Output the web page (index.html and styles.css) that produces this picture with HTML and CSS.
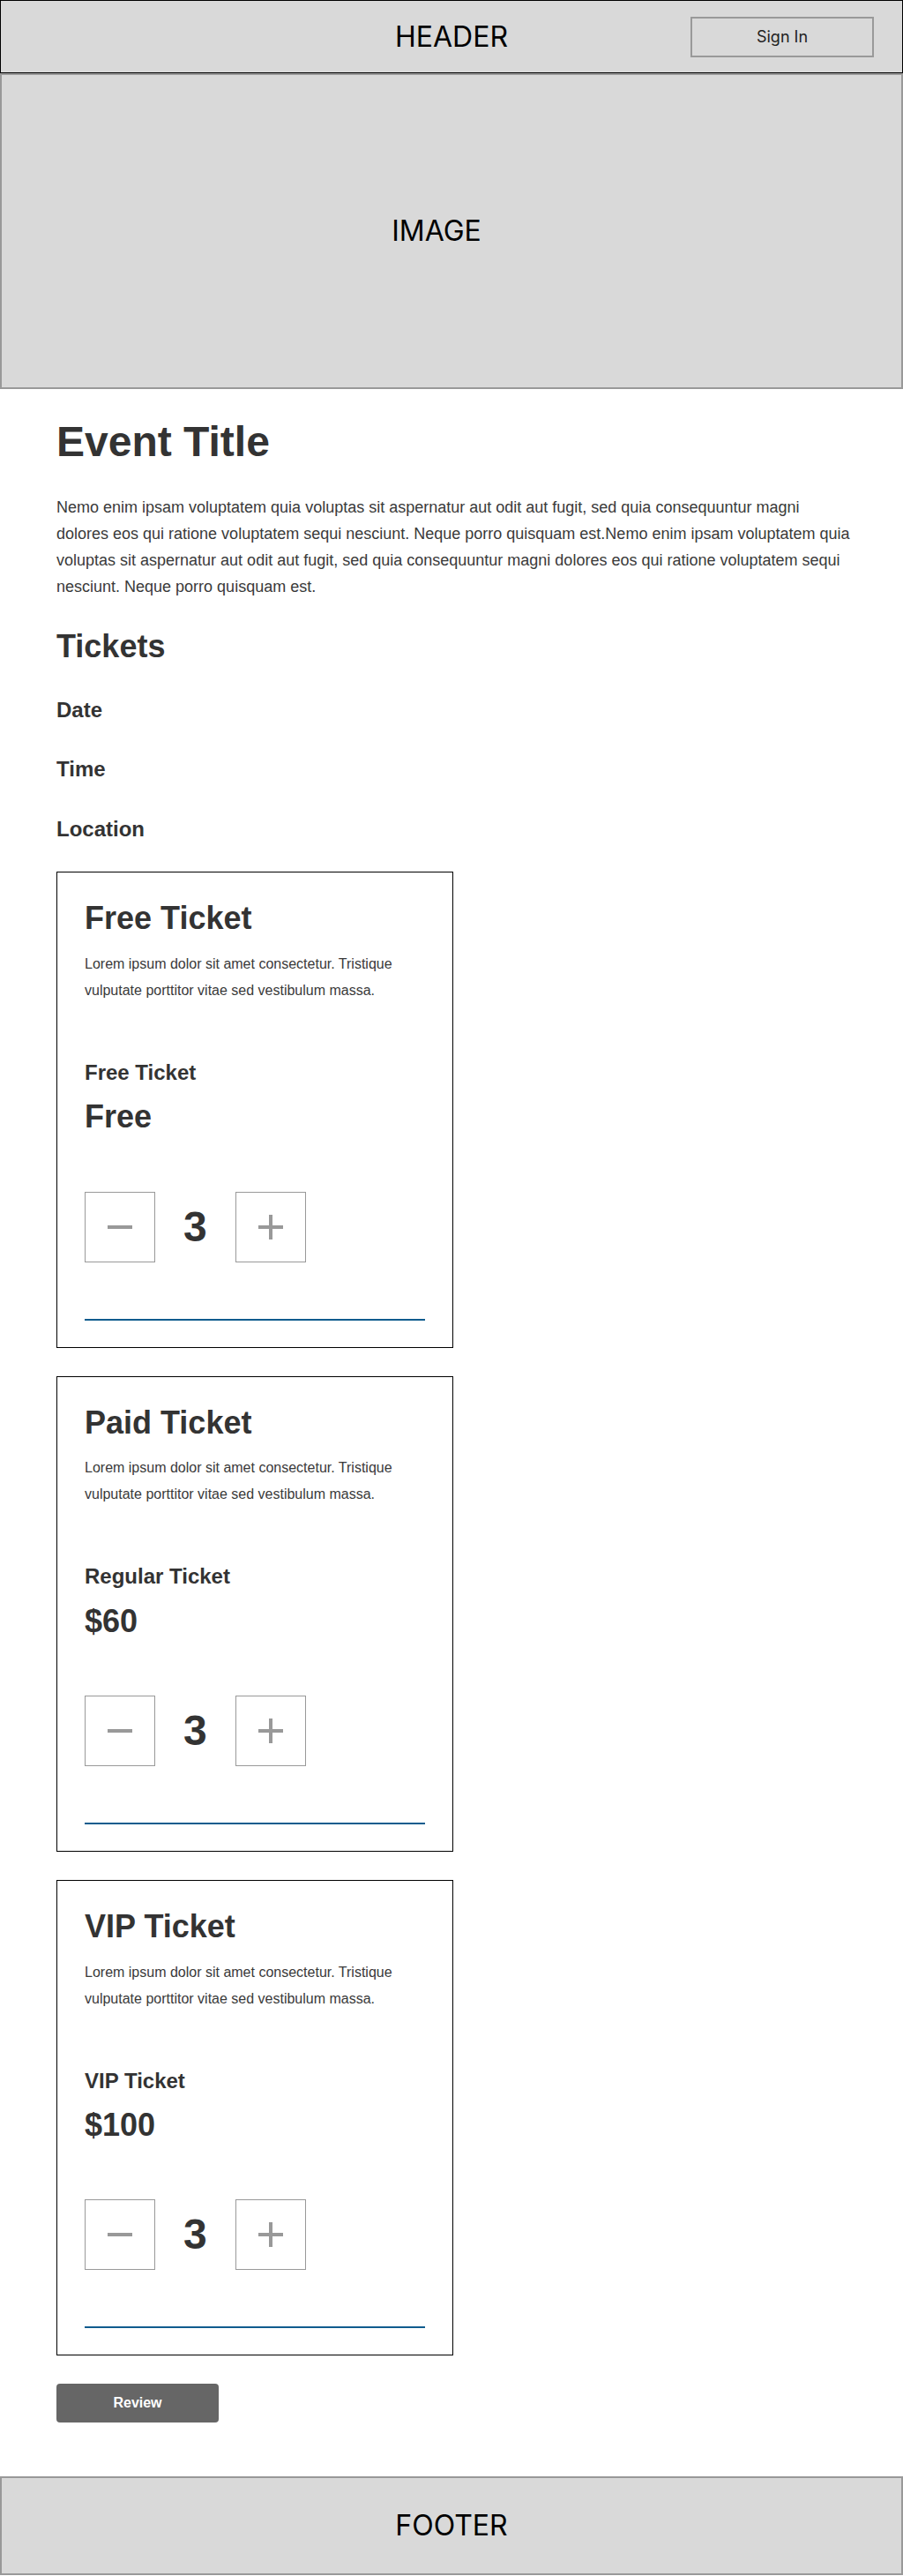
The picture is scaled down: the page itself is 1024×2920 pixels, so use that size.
FILE: index.html
```html
<!DOCTYPE html>
<html lang="en">
<head>
<meta charset="utf-8">
<title>Event</title>
<link rel="stylesheet" href="styles.css">
</head>
<body>
<header class="site-header">
  <div class="header-title">HEADER</div>
  <button class="signin" type="button">Sign In</button>
</header>
<section class="hero"><span class="hero-label">IMAGE</span></section>
<main class="content">
  <h1 class="event-title">Event Title</h1>
  <p class="event-desc">Nemo enim ipsam voluptatem quia voluptas sit aspernatur aut odit aut fugit, sed quia consequuntur magni dolores eos qui ratione voluptatem sequi nesciunt. Neque porro quisquam est.Nemo enim ipsam voluptatem quia voluptas sit aspernatur aut odit aut fugit, sed quia consequuntur magni dolores eos qui ratione voluptatem sequi nesciunt. Neque porro quisquam est.</p>
  <h2 class="section-title">Tickets</h2>
  <h3 class="meta meta-first">Date</h3>
  <h3 class="meta">Time</h3>
  <h3 class="meta">Location</h3>

  <div class="ticket-list">
    <article class="ticket-card">
      <h2 class="card-title">Free Ticket</h2>
      <p class="card-desc">Lorem ipsum dolor sit amet consectetur. Tristique vulputate porttitor vitae sed vestibulum massa.</p>
      <h3 class="tier-name">Free Ticket</h3>
      <div class="tier-price">Free</div>
      <div class="qty">
        <button class="qty-btn" type="button" aria-label="Decrease"><svg width="28" height="28" viewBox="0 0 28 28"><rect x="0" y="12" width="28" height="4" fill="#999"/></svg></button>
        <span class="qty-value">3</span>
        <button class="qty-btn" type="button" aria-label="Increase"><svg width="28" height="28" viewBox="0 0 28 28"><rect x="0" y="12" width="28" height="4" fill="#999"/><rect x="12" y="0" width="4" height="28" fill="#999"/></svg></button>
      </div>
      <div class="card-rule"></div>
    </article>

    <article class="ticket-card">
      <h2 class="card-title">Paid Ticket</h2>
      <p class="card-desc">Lorem ipsum dolor sit amet consectetur. Tristique vulputate porttitor vitae sed vestibulum massa.</p>
      <h3 class="tier-name">Regular Ticket</h3>
      <div class="tier-price">$60</div>
      <div class="qty">
        <button class="qty-btn" type="button" aria-label="Decrease"><svg width="28" height="28" viewBox="0 0 28 28"><rect x="0" y="12" width="28" height="4" fill="#999"/></svg></button>
        <span class="qty-value">3</span>
        <button class="qty-btn" type="button" aria-label="Increase"><svg width="28" height="28" viewBox="0 0 28 28"><rect x="0" y="12" width="28" height="4" fill="#999"/><rect x="12" y="0" width="4" height="28" fill="#999"/></svg></button>
      </div>
      <div class="card-rule"></div>
    </article>

    <article class="ticket-card">
      <h2 class="card-title">VIP Ticket</h2>
      <p class="card-desc">Lorem ipsum dolor sit amet consectetur. Tristique vulputate porttitor vitae sed vestibulum massa.</p>
      <h3 class="tier-name">VIP Ticket</h3>
      <div class="tier-price">$100</div>
      <div class="qty">
        <button class="qty-btn" type="button" aria-label="Decrease"><svg width="28" height="28" viewBox="0 0 28 28"><rect x="0" y="12" width="28" height="4" fill="#999"/></svg></button>
        <span class="qty-value">3</span>
        <button class="qty-btn" type="button" aria-label="Increase"><svg width="28" height="28" viewBox="0 0 28 28"><rect x="0" y="12" width="28" height="4" fill="#999"/><rect x="12" y="0" width="4" height="28" fill="#999"/></svg></button>
      </div>
      <div class="card-rule"></div>
    </article>
  </div>

  <button class="review-btn" type="button">Review</button>
</main>
<footer class="site-footer"><span class="footer-label">FOOTER</span></footer>
</body>
</html>
```
FILE: styles.css
```css
* {
  box-sizing: border-box;
}

body {
  margin: 0;
  font-family: "Liberation Sans", Arial, sans-serif;
  color: #333;
  background: #fff;
}

.site-header {
  height: 83px;
  background: #d9d9d9;
  border: 1px solid #000;
  display: grid;
  grid-template-columns: 1fr auto 1fr;
  align-items: center;
  padding: 0 32px;
}

.header-title {
  grid-column: 2;
  font-family: Inter, "Noto Sans", sans-serif;
  font-size: 32px;
  line-height: 1;
  color: #000;
}

.signin {
  grid-column: 3;
  justify-self: end;
  width: 208px;
  height: 46px;
  border: 2px solid #999;
  background: transparent;
  font-family: Inter, "Noto Sans", sans-serif;
  font-size: 18px;
  color: #222;
  padding: 0;
}

.hero {
  height: 358px;
  background: #d9d9d9;
  border: 2px solid #999;
  display: flex;
  align-items: center;
  justify-content: center;
  padding-right: 34px;
}

.hero-label,
.footer-label {
  font-family: Inter, "Noto Sans", sans-serif;
  font-size: 32px;
  line-height: 1;
  color: #000;
}

.content {
  padding: 32px 57px 61px 64px;
}

.event-title {
  margin: 0;
  font-size: 48px;
  line-height: 1.15;
  font-weight: 700;
}

.event-desc {
  margin: 32px 0 0;
  font-size: 18px;
  line-height: 30px;
  color: #3a3a3a;
}

.section-title {
  margin: 32px 0 0;
  font-size: 36px;
  line-height: 1.15;
  font-weight: 700;
}

.meta {
  margin: 40px 0 0;
  font-size: 24px;
  line-height: 1.15;
  font-weight: 700;
}

.meta-first {
  margin-top: 37px;
}

.ticket-list {
  margin-top: 35px;
  display: flex;
  flex-direction: column;
  gap: 32px;
}

.ticket-card {
  width: 450px;
  border: 1px solid #000;
  padding: 31px 31px 30px;
}

.card-title {
  margin: 0;
  font-size: 36px;
  line-height: 1.15;
  font-weight: 700;
}

.card-desc {
  margin: 16px 0 0;
  font-size: 16px;
  line-height: 30px;
  color: #3a3a3a;
}

.tier-name {
  margin: 64px 0 0;
  font-size: 24px;
  line-height: 1.15;
  font-weight: 700;
}

.tier-price {
  margin-top: 16px;
  font-size: 36px;
  line-height: 1.15;
  font-weight: 700;
}

.qty {
  margin-top: 64px;
  display: flex;
  align-items: center;
  gap: 32px;
}

.qty-btn {
  width: 80px;
  height: 80px;
  border: 1px solid #999;
  background: #fff;
  padding: 0;
  display: flex;
  align-items: center;
  justify-content: center;
}

.qty-btn svg {
  display: block;
}

.qty-value {
  font-size: 48px;
  font-weight: 700;
  line-height: 1;
  color: #333;
}

.card-rule {
  margin-top: 64px;
  height: 2px;
  background: #105c8e;
}

.review-btn {
  display: block;
  margin-top: 32px;
  width: 184px;
  height: 44px;
  border: 0;
  border-radius: 4px;
  background: #666;
  color: #fff;
  font-family: "Liberation Sans", Arial, sans-serif;
  font-size: 16px;
  font-weight: 700;
  padding: 0;
}

.site-footer {
  height: 112px;
  background: #d9d9d9;
  border: 2px solid #999;
  display: flex;
  align-items: center;
  justify-content: center;
}
```
